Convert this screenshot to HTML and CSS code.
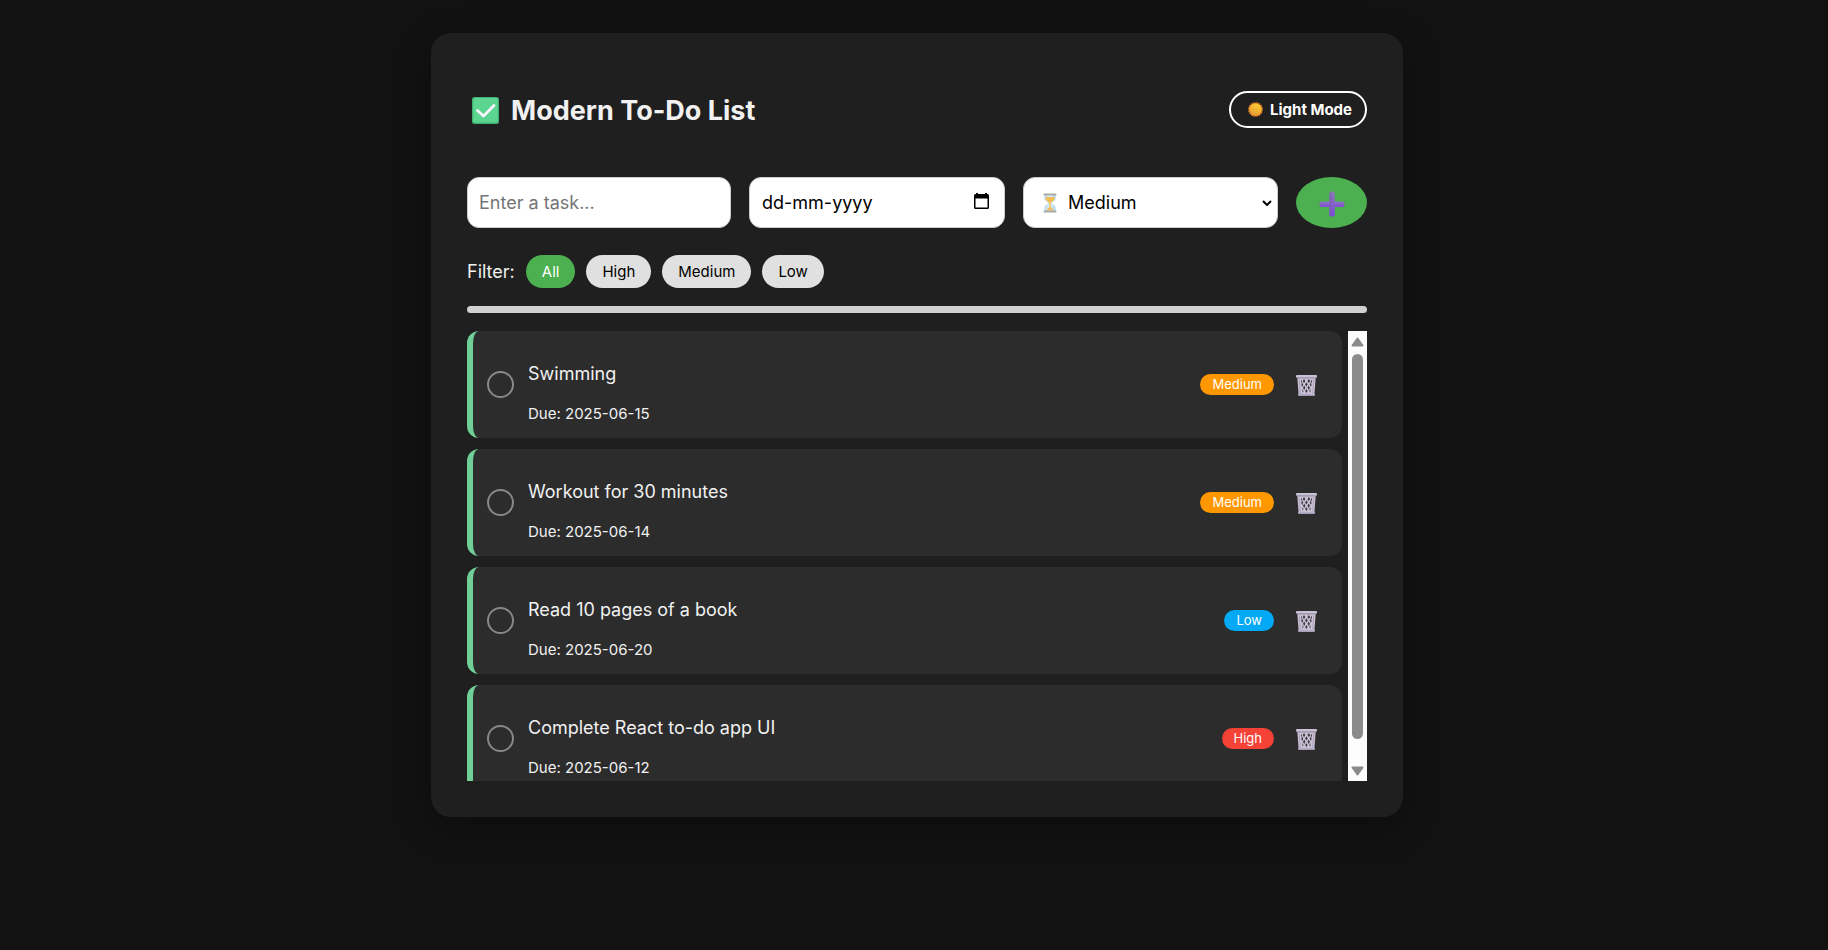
FILE: index.html
```html
<!DOCTYPE html>
<html lang="en">
<head>
<meta charset="utf-8">
<meta name="viewport" content="width=device-width, initial-scale=1">
<title>Modern To-Do List</title>
<link rel="stylesheet" href="styles.css">
</head>
<body>
<svg class="defs" aria-hidden="true">
  <defs>
    <linearGradient id="sun" x1="0.7" y1="0" x2="0.3" y2="1"><stop offset="0" stop-color="#ffcf33"/><stop offset="1" stop-color="#e59a35"/></linearGradient>
    <linearGradient id="plus" x1="0" y1="0" x2="0" y2="1"><stop offset="0" stop-color="#8a7ab8"/><stop offset="1" stop-color="#8048d8"/></linearGradient>
    <linearGradient id="glass" x1="0" y1="0" x2="1" y2="0"><stop offset="0" stop-color="#b4d6ee"/><stop offset="0.5" stop-color="#e3f3fd"/><stop offset="1" stop-color="#a5cdea"/></linearGradient>
    <symbol id="trash" viewBox="0 0 22 22">
      <path d="M1.3 3.5h18.4l-1.400 18H2.700z" fill="#cbc4d6"/>
      <path d="M5.2 5.5l1 2-1 2zM8 5l1.300 2L8 9.200 6.800 7zM12.800 5l1.300 2-1.300 2.200L11.500 7zM16.200 5.500l-.6 4-1-2zM10.400 8.200l1.300 2.200-1.300 2.200-1.300-2.200zM6 8.600l1.200 2L6.300 13l-1-1.800zM14.900 8.600l.7 2.600-.8 1.600-1.100-2.200zM8.200 11.600l1.200 2.200L8.200 16 7 13.800zM12.700 11.600l1.200 2.200-1.200 2.200-1.200-2.200zM10.400 15l1.200 2-1.200 2-1.200-2zM6.400 14.800l1.100 2.200-.9 1.800zM14.600 14.800l-.3 4-1-1.800z" fill="#3b3840"/>
      <path d="M3.200 5.500l1.100 14M17.800 5.500l-1.100 14" stroke="#aaa0bc" stroke-width="1" fill="none"/>
      <rect x="0" y="1" width="21" height="2.800" rx="1" fill="#c9c2d6"/>
      <rect x="1" y="3.500" width="19" height="1" fill="#9188a0"/>
      <rect x="2" y="19.800" width="17" height="2" rx="0.800" fill="#b3aac8"/>
    </symbol>
  </defs>
</svg>
<main class="card">
  <header class="header">
    <h1 class="title">
      <svg class="check-icon" viewBox="0 0 27 27" aria-hidden="true"><rect width="27" height="27" rx="2.500" fill="#41b175"/><rect x="1.200" y="1" width="24.600" height="24.500" rx="2" fill="#5bd58f"/><path d="M5.500 13.500l6 5.500L22 8.500" fill="none" stroke="#fbf5ff" stroke-width="2.800" stroke-linecap="round" stroke-linejoin="round"/></svg>
      Modern To-Do List
    </h1>
    <button class="mode" type="button">
      <svg class="sun-icon" viewBox="0 0 15 15" aria-hidden="true"><circle cx="7.500" cy="7.500" r="6.600" fill="url(#sun)"/><circle cx="7.500" cy="7.500" r="6.600" fill="none" stroke="#e57d25" stroke-width="1.500" stroke-dasharray="1.800 0.800"/></svg>
      Light Mode
    </button>
  </header>

  <form class="form">
    <input class="field task-field" type="text" placeholder="Enter a task..." aria-label="Task">
    <div class="field-wrap">
      <input class="field date-field" type="text" placeholder="dd-mm-yyyy" aria-label="Due date">
      <button class="calendar" type="button" aria-label="Choose a date">
        <svg viewBox="0 0 15 17" width="15" height="17" aria-hidden="true"><path d="M0 2.500a1.500 1.500 0 0 1 1.500-1.500H2V0h2v1h7V0h2v1h.5A1.500 1.500 0 0 1 15 2.500v12a1.500 1.500 0 0 1-1.500 1.500h-12A1.500 1.500 0 0 1 0 14.500zM1.500 5.500v9h12v-9z" fill="#000" fill-rule="evenodd"/></svg>
      </button>
    </div>
    <div class="field-wrap">
      <select class="field select-field" aria-label="Priority">
        <option>High</option>
        <option selected>Medium</option>
        <option>Low</option>
      </select>
      <svg class="hourglass" viewBox="0 0 14 20" aria-hidden="true"><path d="M1.500 2h11v3.500c0 2.500-3.500 3.500-3.500 4.500s3.500 2.500 3.500 5V18h-11v-3c0-2.500 3.500-4 3.500-5S1.500 8 1.500 5.500z" fill="url(#glass)"/><path d="M2.500 4h9v1.500C11.500 7.500 8 9 7.700 10.500V14L11 17.500H3L6.300 14v-3.500C6 9 2.500 7.500 2.500 5.500z" fill="#f5bd55"/><rect x="0.500" y="0.500" width="13" height="2" rx="0.800" fill="#a9a9a5"/><rect x="0.500" y="17.500" width="13" height="2" rx="0.800" fill="#a9a9a5"/></svg>
      <svg class="chevron" viewBox="0 0 10 6" aria-hidden="true"><path d="M1 1l4 4 4-4" fill="none" stroke="#000" stroke-width="2"/></svg>
    </div>
    <button class="add" type="button" aria-label="Add task">
      <svg class="plus-icon" viewBox="0 0 26 26" aria-hidden="true"><rect x="0.500" y="10.500" width="25" height="5.600" rx="2.200" fill="url(#plus)"/><rect x="10.200" y="0.500" width="5.600" height="25" rx="2.200" fill="url(#plus)"/><path d="M11.500 2v21" stroke="#7460a8" stroke-width="1" fill="none"/></svg>
    </button>
  </form>

  <div class="filters">
    <span>Filter:</span>
    <button class="filter active" type="button">All</button>
    <button class="filter" type="button">High</button>
    <button class="filter" type="button">Medium</button>
    <button class="filter" type="button">Low</button>
  </div>

  <div class="progress" role="progressbar" aria-label="Completed" aria-valuenow="0" aria-valuemin="0" aria-valuemax="100"></div>

  <div class="scroller">
    <ul class="list">
      <li class="item">
        <input class="tick" type="checkbox" id="t1">
        <div class="text"><label class="name" for="t1">Swimming</label><span class="due">Due: 2025-06-15</span></div>
        <span class="badge medium">Medium</span>
        <button class="delete" type="button" aria-label="Delete Swimming"><svg class="trash-icon" aria-hidden="true"><use href="#trash"/></svg></button>
      </li>
      <li class="item">
        <input class="tick" type="checkbox" id="t2">
        <div class="text"><label class="name" for="t2">Workout for 30 minutes</label><span class="due">Due: 2025-06-14</span></div>
        <span class="badge medium">Medium</span>
        <button class="delete" type="button" aria-label="Delete Workout"><svg class="trash-icon" aria-hidden="true"><use href="#trash"/></svg></button>
      </li>
      <li class="item">
        <input class="tick" type="checkbox" id="t3">
        <div class="text"><label class="name" for="t3">Read 10 pages of a book</label><span class="due">Due: 2025-06-20</span></div>
        <span class="badge low">Low</span>
        <button class="delete" type="button" aria-label="Delete Read"><svg class="trash-icon" aria-hidden="true"><use href="#trash"/></svg></button>
      </li>
      <li class="item">
        <input class="tick" type="checkbox" id="t4">
        <div class="text"><label class="name" for="t4">Complete React to-do app UI</label><span class="due">Due: 2025-06-12</span></div>
        <span class="badge high">High</span>
        <button class="delete" type="button" aria-label="Delete Complete React"><svg class="trash-icon" aria-hidden="true"><use href="#trash"/></svg></button>
      </li>
    </ul>
    <div class="scrollbar" aria-hidden="true">
      <svg class="arrow" viewBox="0 0 13 10"><path d="M6.500 1.500l5 7h-10z"/></svg>
      <div class="track"><div class="thumb"></div></div>
      <svg class="arrow" viewBox="0 0 13 10"><path d="M6.500 8.500l5-7h-10z"/></svg>
    </div>
  </div>
</main>
</body>
</html>
```

FILE: styles.css
```css
* { box-sizing: border-box; }

body {
  margin: 0;
  padding: 33px 24px 33px 30px;
  min-height: 100vh;
  background: #121212;
  color: #f1f1f1;
  font-family: Inter, "Liberation Sans", sans-serif;
  font-size: 18px;
}

button, input, select { font-family: inherit; }
button { cursor: pointer; }

.defs { position: absolute; width: 0; height: 0; }

.card {
  max-width: 972px;
  margin: 0 auto;
  padding: 36px;
  border-radius: 20px;
  background: #1f1f1f;
  box-shadow: 0 10px 36px rgba(0, 0, 0, 0.3);
}

.header {
  display: flex;
  align-items: center;
  justify-content: space-between;
  padding: 22px 0;
  margin-bottom: 27px;
}

.title {
  display: flex;
  align-items: center;
  gap: 12px;
  margin: 0;
  padding: 2px 0 0 5px;
  font-size: 27px;
  line-height: 35px;
  font-weight: 700;
}

.check-icon { width: 27px; height: 27px; }

.mode {
  display: flex;
  align-items: center;
  gap: 7px;
  height: 37px;
  padding: 0 13px 0 17px;
  border: 2px solid #fff;
  border-radius: 24px;
  background: transparent;
  color: #fff;
  font-size: 15px;
  font-weight: 700;
}

.sun-icon { width: 15px; height: 15px; }

.form {
  display: grid;
  grid-template-columns: 264fr 256fr 255fr 71fr;
  gap: 18px;
  margin-bottom: 27px;
}

.field {
  width: 100%;
  height: 51px;
  padding: 0 12px;
  border: 1px solid #ccc;
  border-radius: 12px;
  background: #fff;
  color: #000;
  font-size: 18px;
  outline: 0;
}

.task-field { padding: 0 11px; }
.field::placeholder { color: #757575; }
.date-field::placeholder { color: #000; }

.field-wrap { position: relative; }

.calendar {
  position: absolute;
  top: 16px;
  right: 16px;
  padding: 0;
  border: 0;
  background: none;
  line-height: 0;
}

.select-field { appearance: none; padding-left: 44px; }
.hourglass { position: absolute; top: 16px; left: 20px; width: 14px; height: 20px; pointer-events: none; }
.chevron { position: absolute; top: 23px; right: 6px; width: 10px; height: 6px; pointer-events: none; }

.add {
  display: flex;
  align-items: center;
  justify-content: center;
  height: 51px;
  padding: 3px 0 0;
  border: 0;
  border-radius: 50%;
  background: #4caf50;
}

.plus-icon { width: 26px; height: 26px; }

.filters {
  display: flex;
  align-items: center;
  gap: 11px;
  margin-bottom: 18px;
}

.filter {
  height: 33px;
  padding: 0 16px;
  border: 0;
  border-radius: 17px;
  background: #e0e0e0;
  color: #000;
  font-size: 15px;
}

.filter.active { background: #4caf50; color: #fff; }

.progress {
  height: 7px;
  margin-bottom: 18px;
  border-radius: 4px;
  background: #d0d0d0;
}

.scroller {
  display: flex;
  gap: 6px;
  max-height: 450px;
}

.list {
  display: flex;
  flex: 1;
  flex-direction: column;
  gap: 11px;
  margin: 0;
  padding: 0 0 12px;
  overflow-y: auto;
  list-style: none;
  scrollbar-width: none;
}

.scrollbar {
  display: flex;
  flex: none;
  flex-direction: column;
  align-items: center;
  gap: 7px;
  width: 19px;
  padding: 6px 0 5px;
  background: #fcfcfc;
}

.arrow {
  flex: none;
  width: 13px;
  height: 10px;
  fill: #8b8b8b;
  stroke: #8b8b8b;
  stroke-width: 2px;
  stroke-linejoin: round;
}

.track { flex: 1; width: 11px; }

.thumb {
  height: 95%;
  border-radius: 6px;
  background: #8b8b8b;
}

.item {
  display: flex;
  flex-shrink: 0;
  align-items: center;
  padding-right: 24px;
  border-left: 6px solid #6fcf97;
  border-radius: 12px;
  background: #2c2c2c;
}

.tick {
  appearance: none;
  flex: none;
  width: 27px;
  height: 27px;
  margin: 0 14px;
  border: 2px solid #888;
  border-radius: 50%;
}

.text {
  display: flex;
  flex: 1;
  flex-direction: column;
  gap: 18px;
  padding: 31px 0 14px;
}

.name { line-height: 24px; }
.due { font-size: 15px; line-height: 20px; }

.badge {
  padding: 0 12px;
  border-radius: 11px;
  color: #fff;
  font-size: 13px;
  line-height: 21px;
}

.medium { background: #ff9800; }
.low { background: #03a9f4; }
.high { background: #f44336; }

.delete {
  margin-left: 22px;
  padding: 0;
  border: 0;
  background: none;
  line-height: 0;
}

.trash-icon { width: 22px; height: 22px; }
```
